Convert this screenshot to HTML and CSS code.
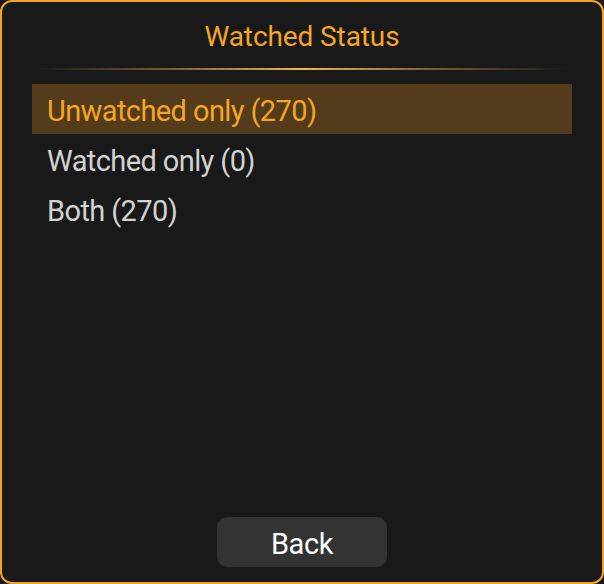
FILE: index.html
```html
<!DOCTYPE html>
<html><head><meta charset="utf-8"><link rel="stylesheet" href="styles.css"></head>
<body>
<div class="dialog">
  <div class="header">
    <div class="title">Watched Status</div>
    <div class="sep"></div>
  </div>
  <ul class="list">
    <li class="item selected">Unwatched only (270)</li>
    <li class="item">Watched only (0)</li>
    <li class="item">Both (270)</li>
  </ul>
  <div class="footer">
    <button class="btn">Back</button>
  </div>
</div>
</body></html>
```
FILE: styles.css
```css
html,body{margin:0;padding:0;background:#191919}
.dialog{box-sizing:border-box;width:604px;height:584px;border:2px solid #f2a325;border-radius:12px;background:#191919;display:flex;flex-direction:column;font-family:"Roboto",sans-serif;padding:0 30px 15px}
.header{padding-top:19px}
.title{font-size:28px;line-height:32px;text-align:center;color:#f5a623;letter-spacing:-0.1px}
.sep{height:2px;margin:15px 3px 0;background:linear-gradient(90deg,rgba(230,170,70,0) 0%,rgba(200,150,70,0.55) 25%,#f0b84a 50%,rgba(200,150,70,0.55) 75%,rgba(230,170,70,0) 100%)}
.list{list-style:none;margin:14px 0 0;padding:0;flex:1}
.item{height:50px;box-sizing:border-box;padding:4px 0 0 15px;line-height:46px;font-size:29px;letter-spacing:-0.6px;color:#d2d2d2;white-space:nowrap}
.item.selected{background:#533b1c;color:#f5a623}
.footer{display:flex;justify-content:center}
.btn{width:170px;height:50px;border:none;border-radius:10px;background:#333333;color:#ffffff;font-family:"Roboto",sans-serif;font-size:29px;letter-spacing:-0.4px;padding:3px 0 0;margin:0}
```
